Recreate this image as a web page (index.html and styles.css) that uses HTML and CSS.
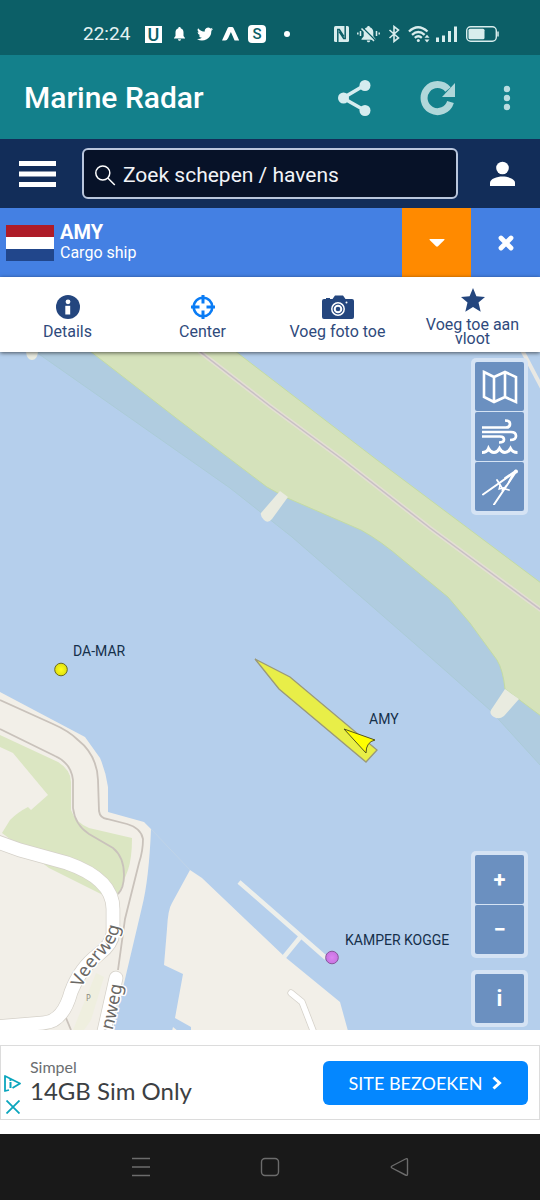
FILE: index.html
```html
<!DOCTYPE html>
<html lang="nl">
<head>
<meta charset="utf-8">
<meta name="viewport" content="width=device-width, initial-scale=1">
<title>Marine Radar</title>
<link rel="stylesheet" href="styles.css">
</head>
<body>
<div class="status">
  <div class="status-left">
    <span class="clock">22:24</span>
    <span class="badge-u">U</span>
    <svg width="15" height="16" viewBox="0 0 15 16"><path fill="#fff" d="M7.500 1c-.8 0-1.200.5-1.200 1.200C4.300 2.800 3.500 4.500 3.500 6.500V10L2 12v.6h11V12l-1.500-2V6.500c0-2-.8-3.700-2.800-4.300C8.700 1.500 8.300 1 7.500 1zM6 13.300h3c0 .9-.6 1.500-1.500 1.500S6 14.200 6 13.300z"/></svg>
    <svg width="16" height="16" viewBox="0 2 24 20"><path fill="#fff" d="M24 4.600a10 10 0 0 1-2.800.8 5 5 0 0 0 2.100-2.700 10 10 0 0 1-3.100 1.200 4.900 4.900 0 0 0-8.400 4.500A14 14 0 0 1 1.700 3.200a4.900 4.900 0 0 0 1.500 6.500 5 5 0 0 1-2.200-.6 4.900 4.900 0 0 0 3.900 4.900 5 5 0 0 1-2.200.1 4.900 4.900 0 0 0 4.600 3.400A9.900 9.900 0 0 1 0 19.500a14 14 0 0 0 21.500-12.400A10 10 0 0 0 24 4.600z"/></svg>
    <svg width="15" height="16" viewBox="0 0 15 16" overflow="visible"><path fill="#fff" d="M-1 14.500 4.700 2q.5-1 1.500-1h2.800q1 0 1.500 1l5.700 12.500h-4.600L7.900 6 5.200 12q-1.300 2.500-3 2.500z"/></svg>
    <span class="badge-s">S</span>
    <svg width="22" height="16" viewBox="0 0 22 16"><circle cx="11" cy="8" r="3" fill="#fff"/></svg>
  </div>
  <div class="status-right">
    <svg width="15" height="16" viewBox="0 0 15 16"><rect width="15" height="16" rx="1.500" fill="#d9eded"/><path fill="none" stroke="#0c5f67" stroke-width="1.500" d="M3.800 16V3.500h1.500l4.500 7M11.200 0v12.500H9.700l-4.500-7"/></svg>
    <svg width="23" height="18" viewBox="0 0 23 18"><path fill="#d9eded" d="M11.500 1c-.9 0-1.400.6-1.400 1.300C7.700 3 6.700 5 6.700 7.300v4L4.500 14v.8h14V14l-2.200-2.700v-4c0-2.300-1-4.300-3.400-5C12.900 1.600 12.400 1 11.500 1zM9.800 15.500h3.400c0 1-.7 1.800-1.700 1.800s-1.700-.8-1.700-1.800z"/><path stroke="#0c5f67" stroke-width="1.500" d="M5.500 2.500 19 16"/><path stroke="#d9eded" stroke-width="1.500" d="M4.500 3.500 17 16M.8 7.500v2M3.500 6v5M19.500 6v5M22.200 7.500v2"/></svg>
    <svg width="12" height="18" viewBox="0 0 12 18"><path fill="none" stroke="#d9eded" stroke-width="1.600" d="m1.500 5 9 8L6 16.500v-15L10.500 5l-9 8"/></svg>
    <svg width="22" height="18" viewBox="0 0 22 18"><g fill="none" stroke="#d9eded" stroke-width="2.300"><path d="M1 6.500q9-8.500 18.500 0M4 9.800q6.300-5.600 12.600 0M6.800 12.800q3.500-3 7 0"/></g><circle cx="10.300" cy="15.500" r="1.500" fill="#d9eded"/><path fill="#d9eded" d="m16.500 12.800 2.500-3 2.500 3zm0 1.600 2.500 3 2.500-3z"/></svg>
    <svg width="20" height="16" viewBox="0 0 20 16" overflow="visible"><path fill="#d9eded" d="M-2 11.500h3V16h-3zM4 9.500h3V16H4zM10 5h3v11h-3zM16 .5h3V16h-3z"/></svg>
    <svg width="33" height="16" viewBox="0 0 33 16"><rect x=".7" y=".7" width="29.600" height="14.600" rx="4" fill="none" stroke="#d9eded" stroke-width="1.400"/><rect x="2.500" y="2.800" width="16" height="10.400" rx="1.500" fill="#d9eded"/><path stroke="#d9eded" stroke-width="1.500" d="M32 5.500v5"/></svg>
  </div>
</div>

<header class="appbar">
  <h1>Marine Radar</h1>
  <button aria-label="Delen"><svg width="36" height="38" viewBox="0 0 36 38"><path fill="none" stroke="#d5ecef" stroke-width="3.600" d="M28 6 6 19l22 12.500"/><circle cx="28" cy="6.500" r="5.500" fill="#d5ecef"/><circle cx="6.500" cy="19" r="5.500" fill="#d5ecef"/><circle cx="28" cy="31.500" r="5.500" fill="#d5ecef"/></svg></button>
  <button aria-label="Vernieuwen"><svg width="36" height="36" viewBox="0 0 36 36"><path fill="none" stroke="#b0d7da" stroke-width="7" d="M29 9.500A13.500 13.500 0 1 0 31.500 22"/><path fill="#b0d7da" d="M36 3v14H23z"/></svg></button>
  <button aria-label="Meer"><svg width="12" height="28" viewBox="0 0 12 28"><g fill="#b9dce0"><circle cx="6" cy="5" r="3.200"/><circle cx="6" cy="14" r="3.200"/><circle cx="6" cy="23" r="3.200"/></g></svg></button>
</header>

<div class="searchbar">
  <button class="menu" aria-label="Menu"><svg width="37" height="26" viewBox="0 0 37 26"><path fill="#fff" d="M0 0h37v5H0zM0 10.500h37v5H0zM0 21h37v5H0z"/></svg></button>
  <label class="search">
    <svg width="21" height="22" viewBox="0 0 21 22"><g fill="none" stroke="#fff" stroke-width="1.500"><circle cx="7.800" cy="9" r="7"/><path d="m12.800 14 7 7"/></g></svg>
    <input type="text" placeholder="Zoek schepen / havens" aria-label="Zoek schepen / havens">
  </label>
  <button class="user" aria-label="Account"><svg width="25" height="26" viewBox="0 0 25 26"><circle cx="12.500" cy="7" r="6.300" fill="#fff"/><path fill="#fff" d="M0 25v-3.200c0-4 7-6.300 12.500-6.300S25 17.800 25 21.800V25z"/></svg></button>
</div>

<section class="ship">
  <svg class="flag" width="48" height="36" viewBox="0 0 48 36"><path fill="#ae1c28" d="M0 0h48v12H0z"/><path fill="#fff" d="M0 12h48v12H0z"/><path fill="#21468b" d="M0 24h48v12H0z"/></svg>
  <div class="ship-name"><strong>AMY</strong><span>Cargo ship</span></div>
  <button class="toggle" aria-label="Uitklappen"><svg width="16" height="8" viewBox="0 0 16 8"><path fill="#fff" d="M1 0h14q1 0 .3 1L9 7.300q-1 .8-2 0L.7 1Q0 0 1 0z"/></svg></button>
  <button class="close" aria-label="Sluiten"><svg width="16" height="16" viewBox="0 0 16 16"><path stroke="#fff" stroke-width="4.800" stroke-linecap="round" d="m3 3 10 10M13 3 3 13"/></svg></button>
</section>

<nav class="actions">
  <button><svg width="24" height="24" viewBox="0 0 24 24"><circle cx="12" cy="12" r="12" fill="#24467e"/><circle cx="12" cy="6.800" r="2.400" fill="#fff"/><path fill="#fff" d="M9.300 10.800h4.900v8.700H9.300z"/></svg>Details</button>
  <button><svg width="24" height="24" viewBox="0 0 24 24"><g fill="none" stroke="#0a7cf5"><circle cx="12" cy="12" r="9.300" stroke-width="2.600"/><path stroke-width="3" d="M12 0v8.500M12 15.500V24M0 12h8.500M15.500 12H24"/></g></svg>Center</button>
  <button><svg width="32" height="24" viewBox="0 0 32 24"><path fill="#24467e" d="M2 4h2V3h4v1h2.500L13 .5h8L23.500 4H30q2 0 2 2v16q0 2-2 2H2q-2 0-2-2V6q0-2 2-2z"/><circle cx="16" cy="14" r="6.200" fill="none" stroke="#fff" stroke-width="1.500"/><circle cx="16" cy="14" r="3.300" fill="none" stroke="#fff" stroke-width="2"/><circle cx="24.500" cy="7.500" r="1" fill="#fff"/></svg>Voeg foto toe</button>
  <button><svg width="24" height="24" viewBox="0 0 24 24"><path fill="#24467e" d="m12 0 3.400 8.200 8.600.7-6.500 5.700 2.200 9.200L12 19l-7.700 4.800 2.200-9.200L0 8.900l8.600-.7z"/></svg>Voeg toe aan vloot</button>
</nav>

<main class="map">
  <svg class="chart" viewBox="0 352 540 678" preserveAspectRatio="xMidYMid slice">
    <defs>
      <path id="veerweg" d="M82 988Q86 977 94 967T110 949Q117 941 120 925"/>
      <path id="enweg" d="M106 1052Q117 1018 122 985"/>
      <radialGradient id="yellow"><stop offset="0" stop-color="#ffff1a"/><stop offset="1" stop-color="#dfdf10"/></radialGradient>
      <radialGradient id="violet"><stop offset="0" stop-color="#dc85f2"/><stop offset="1" stop-color="#c873e0"/></radialGradient>
    </defs>
    <path fill="#b5cfec" d="M0 352h540v678H0z"/>
    <path fill="#b0cce0" stroke="#abcbd7" d="M36 352 230 488l62 49 75 65 63 55 60 53 51 56V600L200 340z"/>
    <path fill="#d5e2bb" stroke="#c3dba4" d="M90 351 180 421l87 66 18 10 76 33q20 11 42 30l45 37 22 26 27 37q6 10 8 29l36 27V583L377 460 235 351z"/>
    <path fill="none" stroke="#e3dfd3" stroke-width="4.500" d="m199 351 71 55 73 54 87 68 111 82"/>
    <path fill="none" stroke="#c8bfc5" stroke-width="1.500" d="m199 351 71 55 73 54 87 68 111 82"/>
    <path fill="none" stroke="#e9e8e3" stroke-width="4" d="m522 350 20 38"/>
    <path fill="#e9ebe0" d="m280 491 8 6-16 22q-4 5-8 1t-3-7zM505 689l14 10-15 17q-5 4-10 1t-3-7zM26 352h12q-1 8-6 8t-6-8z"/>

    <path fill="#f2efe8" d="M0 692 85 737l15 21q6 14 8 29v25l36 10 7 7q-2 50-9 78l-29 123H0z"/>
    <path fill="#dbe6c2" d="M0 735l58 27q13 8 13 20v28q4 12 18 18l43 10q0 20-4 32l-9 23-10 5-60-30-47-35 8-13q8-8 18-13l3 3 17-15-35-42-13-6z"/>
    <g fill="none" stroke="#c9c2bb" stroke-width="1.800">
      <path d="m0 700 53 24q16 7 25 16 19 15 20 40l1 31q1 7 8 8l20 5q14 4 16 15 0 12-4 24l-14 56-7 51"/>
      <path d="m0 729 55 27q16 7 18 24v28q2 17 16 26l24 14q11 9 11 27 0 13-6 19"/>
      <path d="m66 1018 5 12"/>
    </g>
    <path fill="none" stroke="#d5d1c9" stroke-width="14.500" d="m-5 841 25 9 47 13q46 16 46 46v24q-1 11-14 21-19 14-28 38-8 30-28 31l-48 4"/>
    <path fill="none" stroke="#d5d1c9" stroke-width="14.500" stroke-linecap="round" d="m116 978-14 62"/>
    <path fill="none" stroke="#fff" stroke-width="13" d="m-5 841 25 9 47 13q46 16 46 46v24q-1 11-14 21-19 14-28 38-8 30-28 31l-48 4"/>
    <path fill="none" stroke="#fff" stroke-width="13" stroke-linecap="round" d="m116 978-14 62"/>
    <path fill="#efefdf" d="m96 973 8 4-13 43-7 10H73z"/>
    <g class="street"><text><textPath href="#veerweg">Veerweg</textPath></text><text text-anchor="end"><textPath href="#enweg" startOffset="100%">enweg</textPath></text></g>
    <text class="parking" x="86" y="1001">P</text>

    <path fill="none" stroke="#c0d4e8" d="m151 829 39 41"/>
    <path fill="#f2efe8" d="m190 870 12 8 83 79 55 45 8 29H191v-4l-16-9 8-44-19-9 3-36q1-20 5-26zM173 1027l5 4h-6z"/>
    <path fill="none" stroke="#edefeb" stroke-width="4.500" d="m239 882 87 76M302 935l-18 22"/>
    <g fill="none" stroke-linecap="round" stroke-linejoin="round"><path stroke="#d5d1c9" stroke-width="7" d="m291 993 11 9 12 31"/><path stroke="#fff" stroke-width="5.500" d="m291 993 11 9 12 31"/></g>

    <path fill="#e8ee48" stroke="#9b9a78" stroke-width="1.300" d="m255 659 35 18 87 73-11 12-87-73z"/>
    <path fill="#ffff00" stroke="#55551c" d="m344 729 31 11q-9 2-9 13z"/>
    <circle cx="61" cy="669.500" r="6.300" fill="url(#yellow)" stroke="#6c6c20"/>
    <circle cx="332" cy="957.500" r="6.300" fill="url(#violet)" stroke="#88579b"/>
    <g class="vessel"><text x="73" y="656">DA-MAR</text><text x="369" y="724">AMY</text><text x="345" y="945">KAMPER KOGGE</text></g>
  </svg>

  <div class="controls controls-top">
    <div class="group">
      <button aria-label="Kaartlagen"><svg width="36" height="36" viewBox="0 0 36 36"><path fill="none" stroke="#fff" stroke-width="2.600" d="m2 3 10 5 11-5 11 5v25l-11-5-11 5-10-5zM12 8v25M23 3v25"/></svg></button>
      <button aria-label="Weer"><svg width="36" height="36" viewBox="0 0 36 36"><g fill="none" stroke="#fff" stroke-width="2.700"><path d="M0 8.500h24q4 0 4-3.500t-5-3.500M0 13h29q5 0 5 4t-6 4M0 17.500h18q4 0 4 3t-5 3"/></g><path fill="none" stroke="#fff" stroke-width="3" stroke-linejoin="miter" d="M0 33.500q5 0 6.500-4 2 4 5.500 4t5.500-4q2 4 5.500 4t5.500-4q2 4 7 4"/></svg></button>
      <button aria-label="Meten"><svg width="36" height="36" viewBox="0 0 36 36"><g fill="none" stroke="#fff" stroke-linecap="round"><path stroke-width="2" d="M1 25.500 34.500 2 12 35.500"/><path stroke-width="1.800" d="m23 9 9-6-5 10M15 11l5 8 7 2"/><path stroke-width="1.300" d="m18 16-1 4 4-1-1 3 4-5"/></g><circle cx="34" cy="2.500" r="2" fill="#fff"/></svg></button>
    </div>
  </div>
  <div class="controls controls-bottom">
    <div class="group">
      <button aria-label="Inzoomen">+</button>
      <button aria-label="Uitzoomen">−</button>
    </div>
    <div class="group"><button aria-label="Informatie">i</button></div>
  </div>
</main>

<aside class="ad">
  <div class="ad-marks">
    <svg width="17" height="17" viewBox="0 0 17 17"><path fill="none" stroke="#0aa5bd" stroke-width="1.800" stroke-linejoin="round" d="M5 15l-4 1V1l15 7.500L8.500 13"/><path stroke="#0aa5bd" stroke-width="2" d="M6.500 7v6M6.500 4v2"/></svg>
    <svg width="14" height="14" viewBox="0 0 14 14"><path stroke="#0aa5bd" stroke-width="1.800" d="m.5.500 13 13m0-13-13 13"/></svg>
  </div>
  <div class="ad-text"><span>Simpel</span><strong>14GB Sim Only</strong></div>
  <a class="visit" href="#">SITE BEZOEKEN<svg width="10" height="14" viewBox="0 0 10 14"><path fill="none" stroke="#fff" stroke-width="3" d="m1.500 1.500 6 5.500-6 5.500"/></svg></a>
</aside>

<footer class="sysnav">
  <button aria-label="Recent"><svg width="20" height="20" viewBox="0 0 20 20"><path stroke="#6c6c6c" stroke-width="1.400" d="M1 1.500h18M1 10h18M1 18.500h18"/></svg></button>
  <button aria-label="Start"><svg width="20" height="20" viewBox="0 0 20 20"><rect x="1.500" y="1.500" width="17" height="17" rx="3.500" fill="none" stroke="#6c6c6c" stroke-width="1.400"/></svg></button>
  <button aria-label="Terug"><svg width="20" height="20" viewBox="0 0 20 20"><path fill="none" stroke="#6c6c6c" stroke-width="1.400" stroke-linejoin="round" d="M18.500 3v14q0 2-2 1L3 11q-1.500-1 0-2l13.500-7q2-1 2 1z"/></svg></button>
</footer>
</body>
</html>
```
FILE: styles.css
```css
* { box-sizing: border-box; }

body {
  margin: 0;
  min-height: 100vh;
  display: flex;
  flex-direction: column;
  background: #fff;
  font-family: Roboto, "Liberation Sans", sans-serif;
}

svg { display: block; flex: none; }

button {
  display: flex;
  align-items: center;
  justify-content: center;
  margin: 0;
  padding: 0;
  border: 0;
  background: none;
  font: inherit;
  cursor: pointer;
}

.status {
  display: flex;
  justify-content: space-between;
  align-items: flex-end;
  height: 55px;
  padding: 0 41px 11px 83px;
  background: #0c5f67;
  color: #fff;
}
.status-left, .status-right { display: flex; align-items: center; height: 20px; }
.status-left { gap: 10px; }
.status-right { gap: 8px; }
.clock { width: 52px; font-size: 19px; line-height: 18px; color: #e4f2f2; }
.badge-u, .badge-s { display: grid; place-items: center; height: 17px; line-height: 17px; font-weight: 500; }
.badge-u { width: 17px; background: #fff; color: #0c5f67; font-size: 18px; }
.badge-s { width: 18px; height: 18px; border-radius: 4px; background: #fff; color: #0c5f67; font-size: 15px; }

.appbar {
  display: flex;
  align-items: center;
  gap: 46px;
  height: 84px;
  padding: 2px 27px 0 24px;
  background: #13808b;
}
.appbar h1 { flex: 1; margin: 0; font-size: 30px; line-height: 36px; font-weight: 500; color: #fff; white-space: nowrap; }

.searchbar {
  display: flex;
  align-items: center;
  gap: 26px;
  height: 69px;
  padding: 0 25px 0 19px;
  background: #122d59;
}
.search {
  flex: 1;
  display: flex;
  align-items: center;
  gap: 7px;
  height: 51px;
  margin-right: 6px;
  padding: 2px 11px 0;
  border: 2px solid #b9c6dc;
  border-radius: 6px;
  background: #071228;
}
.search input {
  flex: 1;
  min-width: 0;
  padding: 0;
  border: 0;
  outline: 0;
  background: none;
  font: 21px/28px Roboto, "Liberation Sans", sans-serif;
  color: #fff;
}
.search input::placeholder { color: #f2f4f8; opacity: 1; }

.ship { display: flex; align-items: center; height: 69px; background: #4480e3; color: #fff; }
.flag { margin-left: 6px; }
.ship-name { flex: 1; display: flex; flex-direction: column; padding: 0 6px 2px; }
.ship-name strong { font-size: 20px; line-height: 22px; font-weight: 700; }
.ship-name span { font-size: 16px; line-height: 20px; }
.toggle, .close { width: 69px; height: 100%; }
.toggle { background: #ff8a00; }

.actions {
  position: relative;
  z-index: 1;
  display: grid;
  grid-template-columns: repeat(4, 1fr);
  height: 75px;
  background: #fff;
  box-shadow: 0 1px 4px rgba(0, 0, 0, .6);
}
.actions button {
  flex-direction: column;
  gap: 6px;
  padding: 4px 12px 0;
  font-size: 16px;
  line-height: 14px;
  color: #2f4a7c;
}

.map { position: relative; flex: 1 0 678px; overflow: hidden; background: #b5cfec; }
.chart { position: absolute; inset: 0; width: 100%; height: 100%; }
.vessel { font-size: 14px; fill: #15304a; }
.street {
  font-family: "Noto Sans", "Open Sans", sans-serif;
  font-size: 18px;
  fill: #6a6865;
  stroke: #fff;
  stroke-width: 3px;
  paint-order: stroke;
}
.parking { font: 8px "Noto Sans", sans-serif; fill: #8d8b80; }

.controls { position: absolute; right: 12px; display: flex; flex-direction: column; gap: 12px; }
.controls-top { top: 6px; }
.controls-bottom { bottom: 3px; }
.group {
  display: flex;
  flex-direction: column;
  gap: 1px;
  padding: 4px;
  border-radius: 5px;
  background: #d5e3f4;
}
.group button { width: 49px; height: 49px; border-radius: 2px; background: #6b90c0; color: #fff; font-size: 22px; font-weight: 700; }

.ad {
  display: flex;
  align-items: center;
  height: 75px;
  margin: 15px 0 14px;
  padding-right: 11px;
  border: 1px solid #dcdcdc;
}
.ad-marks { display: flex; flex-direction: column; align-items: center; gap: 8px; padding: 24px 0 0 3px; }
.ad-text { flex: 1; display: flex; flex-direction: column; padding: 0 0 4px 9px; color: #3c4043; font-family: Lato, sans-serif; white-space: nowrap; }
.ad-text span { font-size: 16px; line-height: 20px; color: #6b6e71; }
.ad-text strong { font-size: 24px; line-height: 28px; font-weight: 400; }
.visit {
  display: flex;
  align-items: center;
  justify-content: center;
  gap: 10px;
  width: 205px;
  height: 44px;
  border-radius: 6px;
  background: #0487ff;
  color: #fff;
  font: 18px/24px Lato, sans-serif;
  text-decoration: none;
  white-space: nowrap;
}

.sysnav { display: flex; align-items: center; justify-content: center; gap: 109px; height: 66px; background: #191919; }
```
